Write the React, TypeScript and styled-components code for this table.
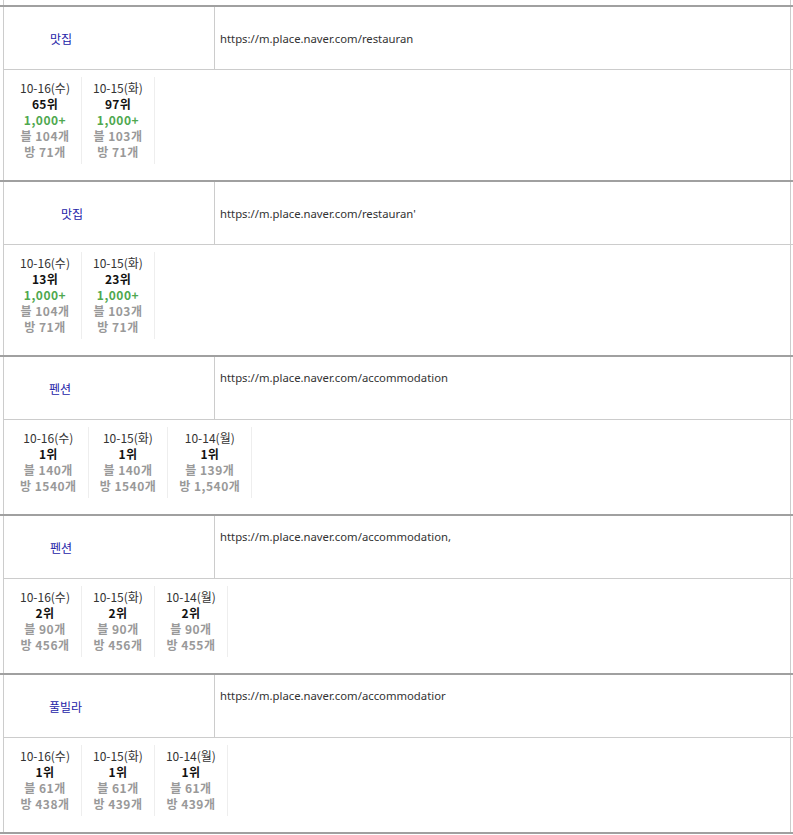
import styled, { createGlobalStyle } from "styled-components";

const GlobalStyle = createGlobalStyle`
    body {
        margin: 0;
        background: #fff;
        font-family: "Noto Sans", "Noto Sans CJK KR", sans-serif;
    }
`

const Frame = styled.div`
    margin-left: 3px;
    width: 788px;
    padding-top: 5px;
    border-left: 1px solid #ccc;
    border-right: 1px solid #ccc;
    box-sizing: border-box;
`

const Block = styled.div`
    margin: 0 -3px 0 -4px;
    padding: 0 3px 0 4px;
    border-top: 2px solid #a0a0a0;
`

const Header = styled.div`
    display: grid;
    grid-template-columns: 212px 1fr;
    height: 63px;
    box-sizing: border-box;
    border-bottom: 1px solid #ccc;
    margin-left: -1px;
    margin-right: -3px;
`

const NameCell = styled.div<{ $indent: number }>`
    display: flex;
    align-items: center;
    padding-left: ${p => p.$indent}px;
    border-right: 1px solid #ccc;
    margin-left: 1px;
    font-size: 12px;
    color: #2424a8;
    font-family: "Noto Sans CJK KR", sans-serif;
`

const UrlCell = styled.div<{ $top?: boolean }>`
    display: flex;
    align-items: ${p => (p.$top ? "flex-start" : "center")};
    padding: ${p => (p.$top ? "13px" : "0")} 0 0 5px;
    font-size: 11.3px;
    color: #333;
    white-space: nowrap;
    overflow: hidden;
`

const Stats = styled.div`
    display: flex;
    padding: 7px 0 16px 5px;
`

const DayCell = styled.div`
    padding: 3px 11px 4px;
    border-right: 1px solid #eee;
    text-align: center;
    font-size: 12px;
    line-height: 16px;
    font-family: "Noto Sans CJK KR", sans-serif;
    white-space: nowrap;
`

const DateText = styled.div`
    color: #333;
`

const Rank = styled.div`
    color: #111;
    font-weight: bold;
    letter-spacing: 0.3px;
`

const Count = styled.div<{ $green?: boolean }>`
    color: ${p => (p.$green ? "#4fa84f" : "#999")};
    font-weight: bold;
    letter-spacing: 0.5px;
`

type Day = { date: string; rank: string; total?: string; blog: string; room: string };

type Entry = { name: string; indent: number; url: string; top?: boolean; days: Day[] };

const entries: Entry[] = [
    {
        name: "맛집", indent: 46, url: "https://m.place.naver.com/restauran",
        days: [
            { date: "10-16(수)", rank: "65위", total: "1,000+", blog: "블 104개", room: "방 71개" },
            { date: "10-15(화)", rank: "97위", total: "1,000+", blog: "블 103개", room: "방 71개" },
        ],
    },
    {
        name: "맛집", indent: 57, url: "https://m.place.naver.com/restauran'",
        days: [
            { date: "10-16(수)", rank: "13위", total: "1,000+", blog: "블 104개", room: "방 71개" },
            { date: "10-15(화)", rank: "23위", total: "1,000+", blog: "블 103개", room: "방 71개" },
        ],
    },
    {
        name: "펜션", indent: 45, url: "https://m.place.naver.com/accommodation", top: true,
        days: [
            { date: "10-16(수)", rank: "1위", blog: "블 140개", room: "방 1540개" },
            { date: "10-15(화)", rank: "1위", blog: "블 140개", room: "방 1540개" },
            { date: "10-14(월)", rank: "1위", blog: "블 139개", room: "방 1,540개" },
        ],
    },
    {
        name: "펜션", indent: 46, url: "https://m.place.naver.com/accommodation,", top: true,
        days: [
            { date: "10-16(수)", rank: "2위", blog: "블 90개", room: "방 456개" },
            { date: "10-15(화)", rank: "2위", blog: "블 90개", room: "방 456개" },
            { date: "10-14(월)", rank: "2위", blog: "블 90개", room: "방 455개" },
        ],
    },
    {
        name: "풀빌라", indent: 45, url: "https://m.place.naver.com/accommodatior", top: true,
        days: [
            { date: "10-16(수)", rank: "1위", blog: "블 61개", room: "방 438개" },
            { date: "10-15(화)", rank: "1위", blog: "블 61개", room: "방 439개" },
            { date: "10-14(월)", rank: "1위", blog: "블 61개", room: "방 439개" },
        ],
    },
];

const App = () => {
    return (
        <>
            <GlobalStyle />
            <Frame>
                {entries.map((e, i) => (
                    <Block key={i}>
                        <Header>
                            <NameCell $indent={e.indent}>{e.name}</NameCell>
                            <UrlCell $top={e.top}>{e.url}</UrlCell>
                        </Header>
                        <Stats>
                            {e.days.map(d => (
                                <DayCell key={d.date}>
                                    <DateText>{d.date}</DateText>
                                    <Rank>{d.rank}</Rank>
                                    {d.total && <Count $green>{d.total}</Count>}
                                    <Count>{d.blog}</Count>
                                    <Count>{d.room}</Count>
                                </DayCell>
                            ))}
                        </Stats>
                    </Block>
                ))}
                <Block />
            </Frame>
        </>
    );
}

export default App;
